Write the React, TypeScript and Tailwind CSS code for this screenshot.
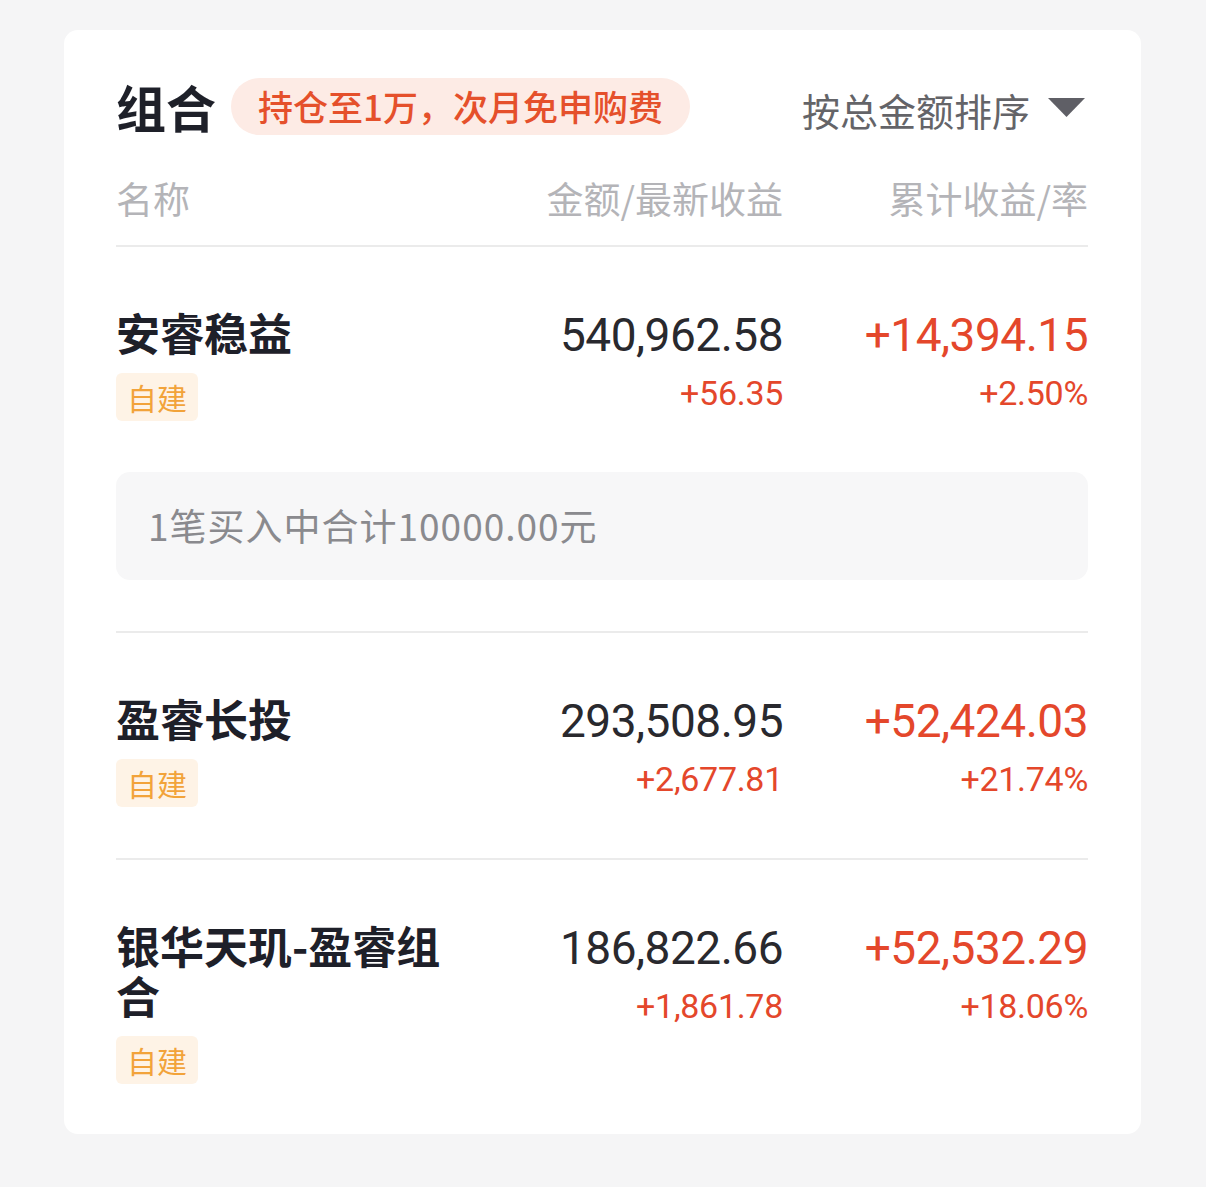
import React from "react";

const CJK = '"Noto Sans CJK SC", "Noto Sans", sans-serif';
const NUM = 'Roboto, "Noto Sans CJK SC", sans-serif';

type Row = {
  name: string;
  amount: string;
  daily: string;
  total: string;
  rate: string;
  info?: string;
};

const rows: Row[] = [
  {
    name: "安睿稳益",
    amount: "540,962.58",
    daily: "+56.35",
    total: "+14,394.15",
    rate: "+2.50%",
    info: "1笔买入中合计10000.00元",
  },
  {
    name: "盈睿长投",
    amount: "293,508.95",
    daily: "+2,677.81",
    total: "+52,424.03",
    rate: "+21.74%",
  },
  {
    name: "银华天玑-盈睿组合",
    amount: "186,822.66",
    daily: "+1,861.78",
    total: "+52,532.29",
    rate: "+18.06%",
  },
];

function RowView({ row, last }: { row: Row; last: boolean }) {
  return (
    <div
      className={
        "pt-[60px] " +
        (last ? "pb-[50px]" : "pb-[51px] border-b-2 border-[#ebebeb]")
      }
    >
      <div className="grid grid-cols-[345px_1fr_305px]">
        <div className="flex flex-col items-start">
          <div
            className="text-[44px] leading-[50px] font-bold text-[#1e2029]"
            style={{ fontFamily: CJK }}
          >
            {row.name}
          </div>
          <div
            className="mt-4 h-[48px] px-[11px] rounded-[6px] bg-[#fef3e6] text-[#f2a33a] text-[30px] leading-[48px]"
            style={{ fontFamily: CJK }}
          >
            自建
          </div>
        </div>
        <div className="flex flex-col items-end" style={{ fontFamily: NUM }}>
          <div className="text-[46px] leading-[56px] text-[#29292e] tracking-[-0.5px]">
            {row.amount}
          </div>
          <div className="mt-[10px] text-[34px] leading-[40px] text-[#e4472b] tracking-[-0.3px]">
            {row.daily}
          </div>
        </div>
        <div className="flex flex-col items-end" style={{ fontFamily: NUM }}>
          <div className="text-[46px] leading-[56px] text-[#e4472b] tracking-[-0.5px]">
            {row.total}
          </div>
          <div className="mt-[10px] text-[34px] leading-[40px] text-[#e4472b] tracking-[-0.3px]">
            {row.rate}
          </div>
        </div>
      </div>
      {row.info && (
        <div
          className="mt-[51px] h-[108px] rounded-[14px] bg-[#f7f7f8] px-[32px] flex items-center text-[37px] tracking-[1px] text-[#8a8a8e]"
          style={{ fontFamily: CJK }}
        >
          {row.info}
        </div>
      )}
    </div>
  );
}

export default function App() {
  return (
    <div className="min-h-[1187px] w-full bg-[#f5f5f6] pt-[30px] pl-[64px] pr-[65px] pb-[52px]">
      <div className="w-[1077px] bg-white rounded-[14px] pl-[52px] pr-[53px] pt-[48px]">
        {/* header */}
        <div className="flex items-center justify-between h-[57px]">
          <div className="flex items-center">
            <div
              className="text-[50px] font-bold leading-[57px] text-[#1e2029]"
              style={{ fontFamily: CJK }}
            >
              组合
            </div>
            <div
              className="ml-[15px] h-[57px] rounded-full bg-[#fdebe5] pl-[27px] pr-[27px] flex items-center text-[35px] font-medium text-[#e5502b]"
              style={{ fontFamily: CJK }}
            >
              持仓至1万，次月免申购费
            </div>
          </div>
          <div className="flex items-center pt-[6px] pr-[3px]">
            <span
              className="text-[38px] text-[#646468] leading-[40px]"
              style={{ fontFamily: CJK }}
            >
              按总金额排序
            </span>
            <svg
              className="ml-[18px] -mt-[4px]"
              width="37"
              height="19"
              viewBox="0 0 37 19"
            >
              <polygon points="0,0 37,0 18.5,19" fill="#5f5f66" />
            </svg>
          </div>
        </div>

        {/* column headers */}
        <div
          className="mt-[44px] pb-[28px] border-b-2 border-[#ebebeb] grid grid-cols-[345px_1fr_305px] text-[37px] leading-[38px] text-[#b4b4b8]"
          style={{ fontFamily: CJK }}
        >
          <div>名称</div>
          <div className="text-right">金额/最新收益</div>
          <div className="text-right">累计收益/率</div>
        </div>

        {rows.map((r, i) => (
          <RowView key={r.name} row={r} last={i === rows.length - 1} />
        ))}
      </div>
    </div>
  );
}
